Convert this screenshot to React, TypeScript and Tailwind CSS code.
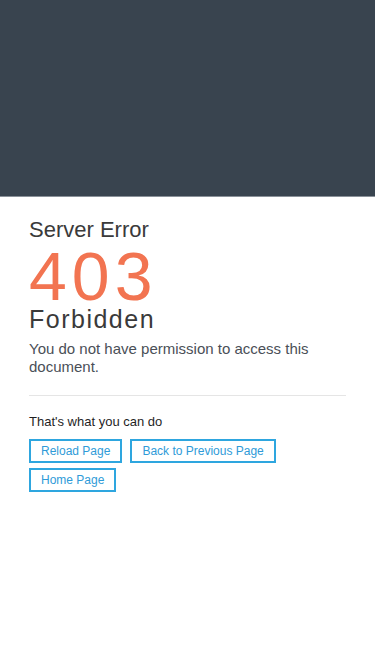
export default function App() {
  return (
    <div className="min-h-[667px] bg-white" style={{ fontFamily: '"Liberation Sans", Arial, sans-serif' }}>
      <div className="h-[197px] bg-[#39444f] border-b border-[#8a9199]" />
      <div className="px-[29px] pt-[20px]">
        <div className="text-[22px] leading-[26px] text-[#3a3a3a]">Server Error</div>
        <div className="text-[68px] leading-[58px] text-[#f27451] tracking-[5px] mt-[4px]">403</div>
        <div className="text-[25px] leading-[28px] text-[#3a3a3a] tracking-[1.5px]">Forbidden</div>
        <p className="text-[15px] leading-[18px] text-[#4a4f57] mt-[7px]">
          You do not have permission to access this document.
        </p>
        <div className="h-px bg-[#e5e5e5] mt-[19px]" />
        <div className="text-[13px] leading-[16px] text-[#1f1f1f] mt-[18px]">That's what you can do</div>
        <div className="flex flex-wrap gap-x-[8px] gap-y-[5px] mt-[9px]">
          <button className="h-[24px] px-[10px] border-2 border-[#2ea6df] text-[12px] text-[#2f9bd8] leading-none">Reload Page</button>
          <button className="h-[24px] px-[10px] border-2 border-[#2ea6df] text-[12px] text-[#2f9bd8] leading-none">Back to Previous Page</button>
          <button className="h-[24px] px-[10px] border-2 border-[#2ea6df] text-[12px] text-[#2f9bd8] leading-none">Home Page</button>
        </div>
      </div>
    </div>
  );
}
